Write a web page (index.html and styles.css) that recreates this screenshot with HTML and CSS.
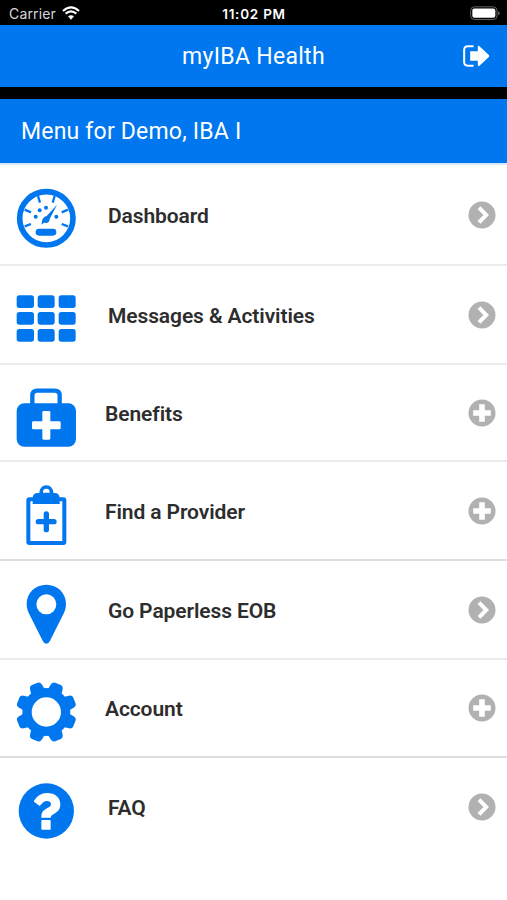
FILE: index.html
```html
<!DOCTYPE html>
<html lang="en">
<head>
<meta charset="utf-8">
<title>myIBA Health</title>
<link rel="stylesheet" href="styles.css">
</head>
<body>
<svg class="defs" width="0" height="0" aria-hidden="true">
  <symbol id="chevron" viewBox="0 0 28 28"><circle cx="14" cy="14" r="13.5" fill="#b1b1b1"/><path d="M11 6.7l7.2 7.3-7.2 7.3" fill="none" stroke="#fff" stroke-width="4"/></symbol>
  <symbol id="plus" viewBox="0 0 28 28"><circle cx="14" cy="14" r="13.5" fill="#b1b1b1"/><path d="M14 5.2v17.6M5.2 14h17.6" stroke="#fff" stroke-width="5.6"/></symbol>
</svg>
<div class="status">
  <span class="carrier">Carrier</span>
  <svg class="wifi" viewBox="0 0 54 42"><path d="M3 15Q27-7 51 15M11 23Q27 9 43 23" fill="none" stroke="#fff" stroke-width="6.5"/><path d="M18 31Q27 24 36 31L27 41Z" fill="#fff"/></svg>
  <span class="clock">11:02 PM</span>
  <svg class="battery" viewBox="0 0 90 44"><rect x="2" y="2" width="79" height="38" rx="11" fill="none" stroke="#626262" stroke-width="3"/><rect x="7" y="7" width="69" height="28" rx="6" fill="#fff"/><path d="M84 15q5 2 5 6t-5 6z" fill="#626262"/></svg>
</div>
<header class="header">
  <h1>myIBA Health</h1>
  <svg class="logout" viewBox="0 0 80 66"><path d="M31 4H14Q3 4 3 15V51Q3 62 14 62H31" fill="none" stroke="#fff" stroke-width="6"/><path d="M21 19H44V4Q45 1 49 4L77 30Q80 33 77 36L49 62Q45 65 44 61V47H21Z" fill="#fff"/></svg>
</header>
<div class="subheader"><h2>Menu for Demo, IBA I</h2></div>
<nav class="menu">
  <a class="row first">
    <svg class="icon" viewBox="0 -45 276 288"><circle cx="139" cy="115" r="80" fill="none" stroke="#0077ee" stroke-width="17"/><path d="M114 48l6 20M164 48l-6 20M74 89l19 8M204 89l-19 8M74 139l19-7M204 139l-19-7" stroke="#0077ee" stroke-width="7"/><g fill="#0077ee"><circle cx="107" cy="110" r="6"/><circle cx="119" cy="91" r="6"/><circle cx="138" cy="83" r="6"/><circle cx="169" cy="110" r="6"/><path d="M171 74L149 117Q149 127 139 129L132 128 124 134 126 124Q127 112 140 108Z"/><rect x="107" y="146" width="62" height="21" rx="10"/></g></svg>
    <span class="label">Dashboard</span><svg class="action"><use href="#chevron"/></svg>
  </a>
  <a class="row">
    <svg class="icon" viewBox="0 -42 276 288"><g fill="#0077ee"><rect x="50" y="46" width="52" height="38" rx="8"/><rect x="113" y="46" width="51" height="38" rx="8"/><rect x="176" y="46" width="51" height="38" rx="8"/><rect x="50" y="96" width="52" height="38" rx="8"/><rect x="113" y="96" width="51" height="38" rx="8"/><rect x="176" y="96" width="51" height="38" rx="8"/><rect x="50" y="147" width="52" height="38" rx="8"/><rect x="113" y="147" width="51" height="38" rx="8"/><rect x="176" y="147" width="51" height="38" rx="8"/></g></svg>
    <span class="label">Messages &amp; Activities</span><svg class="action"><use href="#chevron"/></svg>
  </a>
  <a class="row short group">
    <svg class="icon" viewBox="0 -45 276 288"><path d="M97 76V47Q97 32 112 32H164Q179 32 179 47V76" fill="none" stroke="#0077ee" stroke-width="13"/><rect x="50" y="70" width="178" height="130" rx="23" fill="#0077ee"/><g fill="#fff"><rect x="127" y="93" width="24" height="86" rx="4"/><rect x="96" y="124" width="86" height="24" rx="4"/></g></svg>
    <span class="label">Benefits</span><svg class="action"><use href="#plus"/></svg>
  </a>
  <a class="row group strong">
    <svg class="icon" viewBox="0 -39 276 288"><rect x="85" y="73" width="108" height="131" rx="3" fill="none" stroke="#0077ee" stroke-width="12"/><path d="M98 87V70Q98 54 114 54H118Q120 31 139 31T160 54H163Q179 54 179 70V87Z" fill="#0077ee"/><path d="M129 53Q128 41 139 41T149 53Z" fill="#fff"/><path d="M139 117v47M115 140h47" stroke="#0077ee" stroke-width="16" stroke-linecap="round"/></svg>
    <span class="label">Find a Provider</span><svg class="action"><use href="#plus"/></svg>
  </a>
  <a class="row">
    <svg class="icon" viewBox="0 -42 276 288"><path fill="#0077ee" fill-rule="evenodd" d="M139 29C105 29 80 54 80 87C80 98 83 108 88 118L128 197Q132 206 139 206T150 197L190 118C195 108 198 98 198 87C198 54 173 29 139 29ZM139 58a30 30 0 1 1 0 60a30 30 0 1 1 0-60Z"/></svg>
    <span class="label">Go Paperless EOB</span><svg class="action"><use href="#chevron"/></svg>
  </a>
  <a class="row account group strong">
    <svg class="icon" viewBox="0 -30 276 288"><g transform="translate(139 126)"><circle r="58" fill="none" stroke="#0077ee" stroke-width="28"/><g fill="#0077ee"><path id="tooth" d="M-22-64L-19-82Q-17-91-9-91H9Q17-91 19-82L22-64Z" transform="rotate(22.5)"/><use href="#tooth" transform="rotate(45)"/><use href="#tooth" transform="rotate(90)"/><use href="#tooth" transform="rotate(135)"/><use href="#tooth" transform="rotate(180)"/><use href="#tooth" transform="rotate(225)"/><use href="#tooth" transform="rotate(270)"/><use href="#tooth" transform="rotate(315)"/></g></g></svg>
    <span class="label">Account</span><svg class="action"><use href="#plus"/></svg>
  </a>
  <a class="row last">
    <svg class="icon" viewBox="0 -36 276 288"><circle cx="139" cy="123" r="83" fill="#0077ee"/><path d="M102 92Q116 69 141 69C166 69 181 83 181 103C181 119 172 127 160 133Q152 137 152 143H124V138C124 127 131 120 141 115Q153 110 153 103C153 96 148 93 140 93Q131 93 121 106Q119 109 116 106L103 96Q101 94 102 92Z" fill="#fff"/><rect x="124" y="150" width="28" height="29" rx="3" fill="#fff"/></svg>
    <span class="label">FAQ</span><svg class="action"><use href="#chevron"/></svg>
  </a>
</nav>
</body>
</html>
```
FILE: styles.css
```css
* { box-sizing: border-box; }
body { margin: 0; width: 507px; height: 900px; overflow: hidden; background: #fff; font-family: Roboto, "Liberation Sans", sans-serif; }
.defs { display: block; }
.status { display: grid; grid-template-columns: 53px 150px 84px 1fr 31px; align-items: center; height: 25px; padding: 2px 6px 0 9px; background: #000; color: #fff; font: 14px/20px Inter, "Liberation Sans", sans-serif; white-space: nowrap; }
.carrier { color: #d8d8d8; letter-spacing: 0.15px; }
.wifi { width: 18px; height: 14px; margin-top: -2px; }
.clock { justify-self: center; font-size: 13.5px; font-weight: 600; letter-spacing: 0.75px; }
.battery { grid-column: 5; width: 30px; height: 15px; }
.header { display: grid; grid-template-columns: 1fr 300px 1fr; align-items: center; height: 62px; background: #0077ee; color: #fff; }
h1, h2 { margin: 0; font-size: 23px; font-weight: 400; line-height: 30px; letter-spacing: 0.2px; white-space: nowrap; }
h1 { grid-column: 2; padding-top: 2px; text-align: center; letter-spacing: 0.3px; }
.logout { justify-self: end; width: 27px; height: 22px; margin-right: 17px; }
.subheader { height: 78px; padding: 18px 21px 0; border-top: 12px solid #000; border-bottom: 2px solid #d5e6f6; background: #0077ee; color: #fff; }
.menu { display: flex; flex-direction: column; }
.row { display: grid; grid-template-columns: 92px 1fr 28px; align-items: center; height: 99px; padding-right: 11px; border-bottom: 2px solid #ebebeb; }
.first { height: 101px; }
.short { height: 97px; }
.account { height: 98px; }
.last { height: 99px; border-bottom-color: #fff; }
.strong { border-bottom-color: #dedede; }
.icon { align-self: start; width: 92px; height: 96px; }
.label { padding: 2px 0 0 16px; color: #2d2d2d; font-size: 21px; font-weight: 600; line-height: 26px; letter-spacing: -0.1px; white-space: nowrap; }
.group .label { padding-left: 13px; }
.action { width: 28px; height: 28px; }
```
